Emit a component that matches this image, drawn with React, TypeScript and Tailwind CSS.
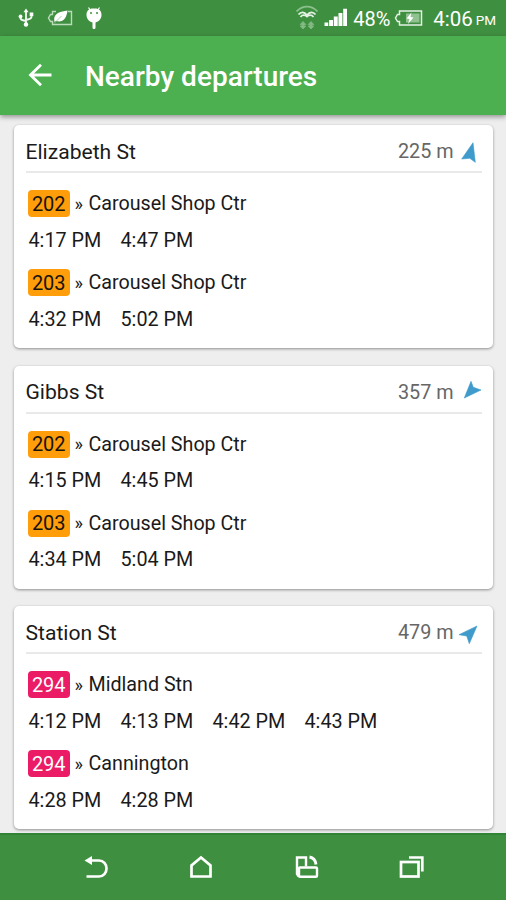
import { ReactNode } from "react";
import classNames from "clsx";

type Route = {
  number: string;
  destination: string;
  times: string[];
};

type Stop = {
  name: string;
  distance: string;
  arrow: string;
  color: "orange" | "pink";
  routes: Route[];
};

const stops: Stop[] = [
  {
    name: "Elizabeth St",
    distance: "225 m",
    arrow: "15,3.7 17.3,23.3 11.7,19.3 3.7,20",
    color: "orange",
    routes: [
      {
        number: "202",
        destination: "Carousel Shop Ctr",
        times: ["4:17 PM", "4:47 PM"],
      },
      {
        number: "203",
        destination: "Carousel Shop Ctr",
        times: ["4:32 PM", "5:02 PM"],
      },
    ],
  },
  {
    name: "Gibbs St",
    distance: "357 m",
    arrow: "6.3,18 13,1.3 15.3,7.3 23,10",
    color: "orange",
    routes: [
      {
        number: "202",
        destination: "Carousel Shop Ctr",
        times: ["4:15 PM", "4:45 PM"],
      },
      {
        number: "203",
        destination: "Carousel Shop Ctr",
        times: ["4:34 PM", "5:04 PM"],
      },
    ],
  },
  {
    name: "Station St",
    distance: "479 m",
    arrow: "19,6 1,14.7 8.7,16 11.3,23.7",
    color: "pink",
    routes: [
      {
        number: "294",
        destination: "Midland Stn",
        times: ["4:12 PM", "4:13 PM", "4:42 PM", "4:43 PM"],
      },
      {
        number: "294",
        destination: "Cannington",
        times: ["4:28 PM", "4:28 PM"],
      },
    ],
  },
];

function StatusBar() {
  return (
    <div className="h-[35.5px] shrink-0 bg-[#3f8f41] flex items-center justify-between pl-[17px] pr-[10px] text-white">
      <div className="flex items-center">
        {/* usb */}
        <svg width="18" height="20" viewBox="0 0 18 20" fill="none">
          <path
            d="M9 3v14M3.5 7.5v2.3c0 1.6 1 2.2 2.5 2.5l3 .7M14.5 6.5v2c0 1.6-1 2.3-2.5 2.6L9 12"
            stroke="#eef6ee"
            strokeWidth="1.9"
          />
          <path d="M9 .5 11.500 4.200H6.500z" fill="#fff" />
          <circle cx="9" cy="16.5" r="2.2" fill="#fff" />
          <circle cx="3.5" cy="8.5" r="1.9" fill="#fff" />
          <rect x="12.7" y="4.5" width="3.6" height="3.6" fill="#fff" />
        </svg>
        {/* power saver */}
        <svg
          className="ml-[12px]"
          width="26"
          height="18"
          viewBox="0 0 26 18"
          fill="none"
        >
          <path
            d="M9 2.5H5.5V5.5H3.500L1.5 9l2 3.500h2v3H24.500v-13H21"
            stroke="#b9dcb9"
            strokeWidth="1.4"
          />
          <path
            d="M7.5 13C6 6.500 9 3 20.500 1.500c-1 8-4.500 12.500-11.500 10.500z"
            fill="#fff"
          />
          <path d="M7 14.500 14.500 7" stroke="#8fc090" strokeWidth=".8" />
        </svg>
        {/* debug droid */}
        <svg className="ml-[12px]" width="18" height="24" viewBox="0 0 18 24">
          <path
            d="m3.5 1.500 2 3M14.500 1.500l-2 3"
            stroke="#fff"
            strokeWidth="1.2"
          />
          <path
            d="M8 2.500h2c4.500 0 6.500 2.500 6.500 6.500 0 3.600-2.500 6.500-6 7.500v5c0 2-3 2-3 0v-5c-3.500-1-6-3.900-6-7.500 0-4 2-6.500 6.500-6.500z"
            fill="#fff"
          />
          <circle cx="6" cy="7" r="1" fill="#3f8f41" />
          <circle cx="12" cy="7" r="1" fill="#3f8f41" />
        </svg>
      </div>
      <div className="flex items-center">
        {/* wifi */}
        <svg width="24" height="25" viewBox="0 0 24 25" fill="none">
          <path
            d="M1.5 6.500c6-6.500 15-6.500 21 0"
            stroke="#8cc08d"
            strokeWidth="1.8"
          />
          <path
            d="M3.5 9.500C6 6.500 9 6.500 12 10c3-3.500 6-3.500 8.500-.5M5.500 12c2-2.500 4-2.500 6.500-.5 2.500-2 4.500-2 6.500.5"
            stroke="#e4f2e4"
            strokeWidth="1.8"
          />
          <path
            d="M8 16.500 5.200 19.500H7V21H5.200L8 24l2.800-3H9v-1.500h1.800zM16 24l-2.800-3H15v-1.500h-1.800L16 16.500l2.800 3H17V21h1.800z"
            fill="#83ba84"
            stroke="#83ba84"
            strokeWidth=".8"
          />
        </svg>
        {/* signal */}
        <svg
          className="ml-[5px]"
          width="24"
          height="19"
          viewBox="0 0 24 19"
          fill="#fff"
        >
          <path d="M.5 14.500h3.700V18H.5zM5.100 12h3.900v6H5.100zM9.800 8.500h3.900V18H9.800zM14.500 5h3.900v13h-3.900zM19.200.8H23V18h-3.800z" />
        </svg>
        <span className="ml-[5px] mt-[3px] w-[39px] text-[20px] leading-none whitespace-nowrap">
          48%
        </span>
        {/* battery */}
        <svg
          className="ml-[2px]"
          width="29"
          height="18"
          viewBox="0 0 29 18"
          fill="none"
        >
          <path
            d="M5.5 2H27.500v14H5.500v-3.500h-2L1.500 9l2-3.500h2z"
            stroke="#e4f1e4"
            strokeWidth="1.5"
          />
          <path d="M12 4.500h13.500v9H12z" fill="#90c191" />
          <path
            d="M17.500 3.500 12.500 9.500l3 .5-1.500 5 5.500-6.500-3-.5z"
            fill="#fff"
          />
        </svg>
        <span className="ml-[10px] mt-[3px] text-[20.5px] leading-none">
          4:06
        </span>
        <span className="ml-[3px] mt-[6px] text-[13.5px] leading-none">PM</span>
      </div>
    </div>
  );
}

function AppBar() {
  return (
    <div className="relative h-[79px] shrink-0 bg-[#4caf50] flex items-center pl-[28px] shadow-[0_2px_5px_rgba(0,0,0,0.38)]">
      <svg width="24" height="24" viewBox="0 0 24 24" fill="none">
        <path
          d="M23.5 12H3M13 1.800 2.500 12 13 22.200"
          stroke="#fff"
          strokeWidth="2.8"
        />
      </svg>
      <h1 className="ml-[33px] mt-[3px] text-[28px] font-medium text-white leading-none">
        Nearby departures
      </h1>
    </div>
  );
}

function RouteRow({ route, color }: { route: Route; color: Stop["color"] }) {
  return (
    <div className="h-[79px] pl-[2.5px]">
      <div className="flex items-center h-[27px]">
        <span
          className={classNames(
            "w-[41.5px] h-[27px] rounded-[4px] flex items-center justify-center",
            {
              "bg-[#ff9d0a] text-[#17130c]": color === "orange",
              "bg-[#eb1b66] text-white": color === "pink",
            },
          )}
        >
          {route.number}
        </span>
        <span className="ml-[5px] w-[14px] text-[18px]">»</span>
        <span className="pt-px text-[19.7px]">{route.destination}</span>
      </div>
      <div className="flex mt-[10px] h-[27px] items-center pl-[0.5px] text-[19.8px]">
        {route.times.map((time, i) => (
          <span key={i} className="w-[92px]">
            {time}
          </span>
        ))}
      </div>
    </div>
  );
}

function StopCard({ stop }: { stop: Stop }) {
  return (
    <div className="h-[223px] shrink-0 bg-white rounded-[5px] px-[11.5px] shadow-[0_1px_3px_rgba(0,0,0,0.4)]">
      <div className="flex items-center h-[48px] pt-[6px] border-b-2 border-[#e9e9e9]">
        <span className="grow pt-px text-[21.1px]">{stop.name}</span>
        <span className="pt-[2px] text-[#666] text-[19.8px]">
          {stop.distance}
        </span>
        <svg className="ml-[4px]" width="24" height="24" viewBox="0 0 24 24">
          <polygon
            points={stop.arrow}
            fill="#3f9bcb"
            stroke="#3f9bcb"
            strokeWidth=".6"
          />
        </svg>
      </div>
      <div className="pt-[17px]">
        {stop.routes.map((route, i) => (
          <RouteRow key={i} route={route} color={stop.color} />
        ))}
      </div>
    </div>
  );
}

function NavIcon({ children }: { children: ReactNode }) {
  return (
    <svg
      width="28"
      height="28"
      viewBox="0 0 28 28"
      fill="none"
      stroke="#fff"
      strokeWidth="2.7"
    >
      {children}
    </svg>
  );
}

function NavBar() {
  return (
    <div className="relative h-[67px] shrink-0 bg-[#3f8f41] border-t-2 border-[#318435] flex items-center justify-between pl-[82px] pr-[81px] pb-px">
      <NavIcon>
        <path d="M8 7.500h9c4.500 0 7.500 3.500 7.500 8s-3 8-7.500 8H4.500" />
        <path d="M2.500 7.500 10 3v9z" fill="#fff" stroke="none" />
      </NavIcon>
      <NavIcon>
        <path d="M4.500 23.500V12.500L14 4.500 23.500 12.500v11z" />
      </NavIcon>
      <NavIcon>
        <path d="M6.500 23.500 5 21V4.500h9v9" strokeWidth="2.4" />
        <rect
          x="7"
          y="14.5"
          width="18"
          height="9.2"
          rx="1"
          strokeWidth="2.4"
        />
        <path d="M17.500 4c4 .7 6 3.200 6.500 7.500" strokeWidth="2.8" />
      </NavIcon>
      <NavIcon>
        <rect x="4" y="9" width="17.5" height="14.5" />
        <path d="M12 4.500h13.300v14" />
      </NavIcon>
    </div>
  );
}

export default function App() {
  return (
    <div className="w-[506px] h-[900px] overflow-hidden flex flex-col bg-[#eee] font-['Roboto',sans-serif]">
      <StatusBar />
      <AppBar />
      <div className="grow min-h-0 flex flex-col gap-[17.5px] pt-[10.5px] pl-[14px] pr-[13px] text-[20px] leading-none text-[#1a1a1a]">
        {stops.map((stop) => (
          <StopCard key={stop.name} stop={stop} />
        ))}
      </div>
      <NavBar />
    </div>
  );
}
